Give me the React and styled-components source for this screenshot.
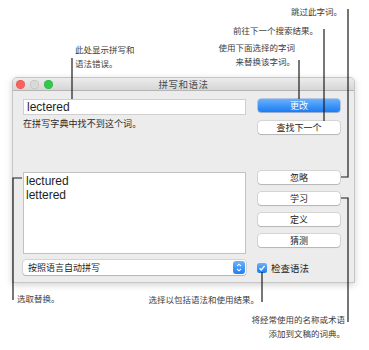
import React from 'react';
import styled, { createGlobalStyle } from 'styled-components';

const GlobalStyle = createGlobalStyle`
  html, body {
    margin: 0;
    padding: 0;
    background: #ffffff;
  }
  body {
    font-family: "Liberation Sans", "Noto Sans CJK SC", sans-serif;
  }
`;

const Page = styled.div`
  position: relative;
  width: 369px;
  height: 350px;
  box-sizing: border-box;
  padding: 77px 0 0 12px;
  background: #fff;
  overflow: hidden;
`;

const Window = styled.div`
  width: 343px;
  height: 206px;
  box-sizing: border-box;
  display: flex;
  flex-direction: column;
  background: #ececec;
  border: 1px solid #c6c6c6;
  border-radius: 5px 5px 0 0;
  box-shadow: 0 2px 7px rgba(0, 0, 0, 0.18);
  overflow: hidden;
`;

const TitleBar = styled.div`
  position: relative;
  height: 13px;
  box-sizing: border-box;
  display: flex;
  align-items: center;
  justify-content: center;
  background: linear-gradient(#ececec, #d6d6d6);
  border-bottom: 1px solid #b4b4b4;
`;

const Lights = styled.div`
  position: absolute;
  left: 3px;
  top: 2px;
  display: flex;
  gap: 5px;
`;

const Light = styled.span`
  width: 9px;
  height: 9px;
  border-radius: 50%;
  background: ${(p) => p.color};
  box-shadow: inset 0 0 0 0.5px rgba(0, 0, 0, 0.15);
`;

const Title = styled.span`
  font-size: 9.5px;
  color: #4a4a4a;
  letter-spacing: 0.5px;
`;

const Body = styled.div`
  flex: 1;
  display: grid;
  grid-template-columns: 223px 82px;
  column-gap: 12px;
  padding: 8px 14px 9px 10px;
`;

const LeftCol = styled.div`
  display: flex;
  flex-direction: column;
`;

const RightCol = styled.div`
  display: flex;
  flex-direction: column;
`;

const TextField = styled.div`
  height: 16px;
  box-sizing: border-box;
  padding-left: 3px;
  background: #fff;
  border: 1px solid #cfcfcf;
  font-size: 12px;
  line-height: 14px;
  color: #1e1e1e;
`;

const Message = styled.div`
  margin-top: 2px;
  font-size: 9px;
  line-height: 14px;
  color: #2a2a2a;
  letter-spacing: 0.1px;
`;

const ListBox = styled.div`
  margin-top: auto;
  height: 82px;
  box-sizing: border-box;
  padding: 1px 2px;
  background: #fff;
  border: 1px solid #c2c2c2;
  font-size: 12px;
  line-height: 14px;
  color: #1e1e1e;
`;

const Popup = styled.div`
  margin-top: 6px;
  height: 15px;
  box-sizing: border-box;
  display: flex;
  align-items: center;
  justify-content: space-between;
  padding: 0 1px 0 5px;
  background: #fff;
  border-radius: 3px;
  box-shadow: 0 0 0 0.5px rgba(0, 0, 0, 0.2), 0 1px 1px rgba(0, 0, 0, 0.15);
  font-size: 9px;
  color: #222;
`;

const Stepper = styled.span`
  width: 12px;
  height: 13px;
  border-radius: 3px;
  background: linear-gradient(#6cb3fa, #1b7ff5);
  display: flex;
  align-items: center;
  justify-content: center;
`;

const Button = styled.div`
  height: 13px;
  margin-top: ${(p) => p.gap || 0}px;
  display: flex;
  align-items: center;
  justify-content: center;
  border-radius: 3px;
  font-size: 9px;
  color: ${(p) => (p.primary ? '#fff' : '#222')};
  background: ${(p) => (p.primary ? 'linear-gradient(#6ab0fb, #1a7df5)' : '#fff')};
  box-shadow: ${(p) =>
    p.primary
      ? '0 0 0 0.5px rgba(20, 90, 200, 0.5), 0 1px 1px rgba(0, 0, 0, 0.15)'
      : '0 0 0 0.5px rgba(0, 0, 0, 0.2), 0 1px 1px rgba(0, 0, 0, 0.15)'};
`;

const CheckRow = styled.label`
  margin-top: 14px;
  margin-left: -1px;
  display: flex;
  align-items: center;
  gap: 4px;
  font-size: 9.5px;
  color: #222;
`;

const CheckBox = styled.span`
  width: 10px;
  height: 10px;
  border-radius: 2.5px;
  background: linear-gradient(#6ab0fb, #1a7df5);
  display: flex;
  align-items: center;
  justify-content: center;
`;

const Callout = styled.div`
  position: absolute;
  top: ${(p) => p.top}px;
  ${(p) => (p.right !== undefined ? `right: ${369 - p.right}px;` : `left: ${p.left}px;`)}
  text-align: ${(p) => (p.right !== undefined ? 'right' : 'left')};
  font-size: 8.5px;
  line-height: 14px;
  color: #3c3c3c;
  white-space: nowrap;
`;

const Leaders = styled.svg`
  position: absolute;
  left: 0;
  top: 0;
  pointer-events: none;
`;

export default function App() {
  return (
    <Page>
      <GlobalStyle />
      <Window>
        <TitleBar>
          <Lights>
            <Light color="#fc605c" />
            <Light color="#d9d9d9" />
            <Light color="#34c84a" />
          </Lights>
          <Title>拼写和语法</Title>
        </TitleBar>
        <Body>
          <LeftCol>
            <TextField>lectered</TextField>
            <Message>在拼写字典中找不到这个词。</Message>
            <ListBox>
              <div>lectured</div>
              <div>lettered</div>
            </ListBox>
            <Popup>
              <span>按照语言自动拼写</span>
              <Stepper>
                <svg width="6" height="9" viewBox="0 0 6 9">
                  <path d="M1 3.2 L3 1.2 L5 3.2 M1 5.8 L3 7.8 L5 5.8" fill="none" stroke="#fff" strokeWidth="1.1" />
                </svg>
              </Stepper>
            </Popup>
          </LeftCol>
          <RightCol>
            <Button primary>更改</Button>
            <Button gap={9}>查找下一个</Button>
            <Button gap={37}>忽略</Button>
            <Button gap={8}>学习</Button>
            <Button gap={8}>定义</Button>
            <Button gap={8}>猜测</Button>
            <CheckRow>
              <CheckBox>
                <svg width="8" height="8" viewBox="0 0 8 8">
                  <path d="M1.5 4.2 L3.3 6 L6.6 1.8" fill="none" stroke="#fff" strokeWidth="1.3" />
                </svg>
              </CheckBox>
              检查语法
            </CheckRow>
          </RightCol>
        </Body>
      </Window>

      <Callout left={75} top={43}>
        此处显示拼写和
        <br />
        语法错误。
      </Callout>
      <Callout right={342} top={5}>跳过此字词。</Callout>
      <Callout right={318} top={24}>前往下一个搜索结果。</Callout>
      <Callout right={295} top={41}>
        使用下面选择的字词
        <br />
        来替换该字词。
      </Callout>
      <Callout left={17} top={292}>选取替换。</Callout>
      <Callout right={259} top={293}>选择以包括语法和使用结果。</Callout>
      <Callout right={345} top={313}>
        将经常使用的名称或术语
        <br />
        添加到文稿的词典。
      </Callout>

      <Leaders width="369" height="350" viewBox="0 0 369 350">
        <g fill="none" stroke="#1c1c1c" strokeWidth="1.2">
          <path d="M72 58 V99" />
          <path d="M299 60 V99" />
          <path d="M324 29 V121" />
          <path d="M348 9 V177 H341" />
          <path d="M341 198 H348 V322" />
          <path d="M262 272 V302" />
          <path d="M22 178 H13 V300" />
        </g>
      </Leaders>
    </Page>
  );
}
